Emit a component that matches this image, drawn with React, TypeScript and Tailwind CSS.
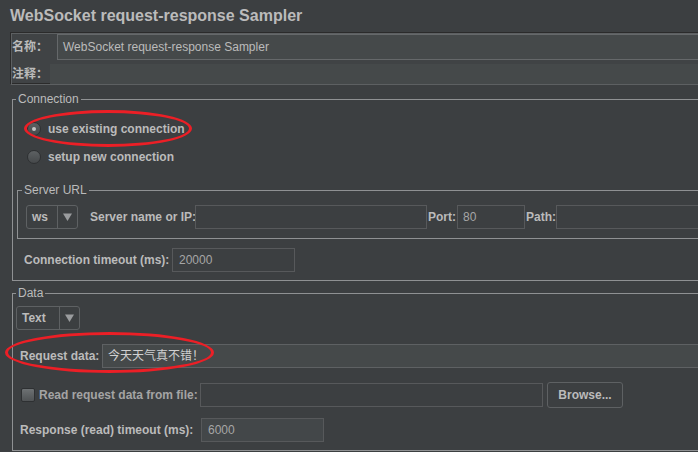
import React from 'react'

const FONT = "font-['Liberation_Sans','Noto_Sans_CJK_SC',sans-serif]"

function Radio({ checked }: { checked?: boolean }) {
  return (
    <span className="flex h-[14px] w-[14px] items-center justify-center rounded-full border border-[#2e3032] bg-gradient-to-b from-[#5d6163] to-[#46494b]">
      {checked && <span className="h-[4px] w-[4px] rounded-full bg-[#c4c4c4]" />}
    </span>
  )
}

function Combo({ label, width }: { label: string; width: string }) {
  return (
    <div className={`flex h-[24px] ${width} items-center rounded-[3px] border border-[#5e6163]`}>
      <span className="flex-1 pl-[5px] text-[12px] font-bold text-[#bbbbbb]">{label}</span>
      <span className="flex h-full w-[20px] items-center justify-center border-l border-[#5e6163]">
        <svg width="9" height="8" viewBox="0 0 9 8">
          <path d="M0 0.5 L9 0.5 L4.5 8 Z" fill="#9a9c9e" />
        </svg>
      </span>
    </div>
  )
}

function Legend({ children, offset }: { children: React.ReactNode; offset: string }) {
  return <legend className={`${offset} px-[2px] text-[12px] leading-[14px] text-[#bbbbbb]`}>{children}</legend>
}

export default function App() {
  return (
    <div className={`relative h-[452px] w-[698px] overflow-hidden bg-[#3c3f41] text-[#bbbbbb] ${FONT}`}>
      {/* Title */}
      <div className="h-[32px] pl-[10px] pt-[6px] text-[16px] font-bold leading-[20px] text-[#bbbbbb]">
        WebSocket request-response Sampler
      </div>

      {/* Name / comment panel */}
      <div className="ml-[10px] w-[700px] border-b border-l border-t border-b-[#5d6062] border-l-[#2b2b2b] border-t-[#2b2b2b] bg-[#404345] shadow-[inset_1px_1px_0_#5d6062,inset_0_-1px_0_#2b2b2b]">
        <div className="flex h-[28px] items-start">
          <span className="w-[46px] pl-[1px] pt-[7px] text-[12px] font-bold leading-[14px]">名称：</span>
          <div className="mt-[1px] flex h-[26px] flex-1 items-center border border-[#65686a] bg-[#45494a] pl-[5px] text-[12px]">
            WebSocket request-response Sampler
          </div>
        </div>
        <div className="mt-[3px] flex h-[20px] items-center">
          <span className="w-[39px] pl-[1px] text-[12px] font-bold leading-[14px]">注释：</span>
          <div className="h-full flex-1 bg-[#45494a]" />
        </div>
      </div>

      {/* Connection */}
      <fieldset className="ml-[12px] mt-[7px] w-[720px] border border-[#8f9193] pb-[8px]">
        <Legend offset="ml-[3px]">Connection</Legend>
        <div className="pt-[9px]">
          <label className="flex h-[28px] items-center gap-[7px] pl-[14px] text-[12px] font-bold">
            <Radio checked />
            use existing connection
          </label>
          <label className="flex h-[28px] items-center gap-[7px] pl-[14px] text-[12px] font-bold">
            <Radio />
            setup new connection
          </label>
        </div>

        <fieldset className="ml-[4px] mt-[12px] w-[700px] border border-[#8f9193] pb-[9px]">
          <Legend offset="ml-[4px]">Server URL</Legend>
          <div className="flex items-center pt-[8px] text-[12px] font-bold">
            <div className="ml-[8px]">
              <Combo label="ws" width="w-[52px]" />
            </div>
            <span className="ml-[12px] w-[105px] whitespace-nowrap">Server name or IP:</span>
            <div className="h-[24px] w-[232px] border border-[#57595b]" />
            <span className="ml-[1px] w-[29px]">Port:</span>
            <div className="flex h-[24px] w-[68px] items-center border border-[#57595b] pl-[5px] font-normal text-[#a6a6a6]">80</div>
            <span className="ml-[1px] w-[30px]">Path:</span>
            <div className="h-[24px] flex-1 border border-[#57595b]" />
          </div>
        </fieldset>

        <div className="mt-[9px] flex items-center text-[12px]">
          <span className="ml-[11px] w-[148px] font-bold">Connection timeout (ms):</span>
          <div className="flex h-[24px] w-[123px] items-center border border-[#57595b] pl-[6px] text-[#a6a6a6]">20000</div>
        </div>
      </fieldset>

      {/* Data */}
      <fieldset className="ml-[12px] mt-[5px] w-[720px] border border-[#8f9193] pb-[8px]">
        <Legend offset="ml-[3px]">Data</Legend>
        <div className="ml-[3px] mt-[6px]">
          <Combo label="Text" width="w-[64px]" />
        </div>

        <div className="mt-[14px] flex items-center text-[12px]">
          <span className="ml-[7px] w-[82px] font-bold">Request data:</span>
          <div className="flex h-[24px] flex-1 items-center border border-[#5e6163] bg-[#45494a] pl-[5px] text-[#d0d0d0]">今天天气真不错！</div>
        </div>

        <div className="mt-[14px] flex items-center text-[12px]">
          <span className="ml-[8px] h-[14px] w-[14px] rounded-[2px] border border-[#2e3032] bg-gradient-to-b from-[#6d7173] to-[#505355]" />
          <span className="ml-[4px] w-[161px] font-bold text-[#a4a4a4]">Read request data from file:</span>
          <div className="h-[24px] w-[343px] border border-[#57595b]" />
          <button className="ml-[4px] flex h-[26px] w-[76px] items-center justify-center rounded-[3px] border border-[#5e6163] text-[12px] font-bold text-[#bbbbbb]">
            Browse...
          </button>
        </div>

        <div className="mt-[10px] flex items-center text-[12px]">
          <span className="ml-[7px] w-[181px] font-bold">Response (read) timeout (ms):</span>
          <div className="flex h-[24px] w-[123px] items-center border border-[#57595b] bg-[#434749] pl-[6px] text-[#a6a6a6]">6000</div>
        </div>
      </fieldset>

      {/* Annotation ellipses */}
      <div className="pointer-events-none absolute left-[24px] top-[110px] h-[37px] w-[168px] rounded-[50%] border-[3px] border-[#ec1f26]" />
      <div className="pointer-events-none absolute left-[5px] top-[332px] h-[41px] w-[209px] rounded-[50%] border-[3px] border-[#ec1f26]" />
    </div>
  )
}
